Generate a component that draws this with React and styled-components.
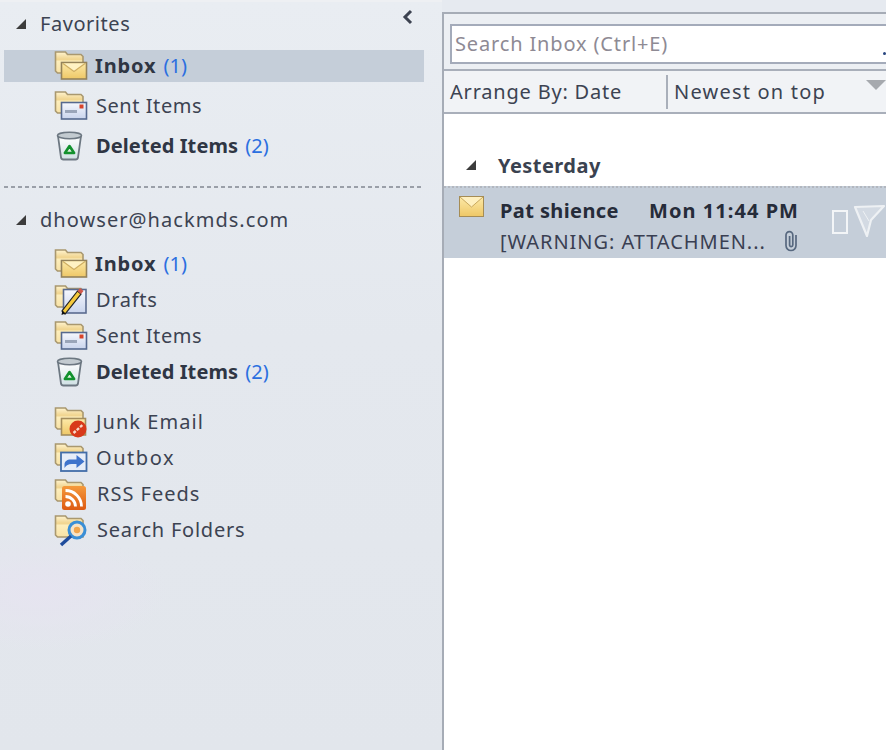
import React from 'react';
import styled, { createGlobalStyle } from 'styled-components';

const GlobalStyle = createGlobalStyle`
    html, body {
        margin: 0;
        padding: 0;
        height: 100%;
        overflow: hidden;
        background: #e6eaf0;
    }
    #root {
        height: 100%;
    }
`;

const Window = styled.div`
    display: flex;
    width: 886px;
    height: 750px;
    overflow: hidden;
    font-family: "Noto Sans", "Open Sans", sans-serif;
    color: #3a4250;
`;

const Sidebar = styled.div`
    flex: 0 0 442px;
    box-sizing: border-box;
    padding: 2px 18px 0 4px;
    border-top: 2px solid #eef0f3;
    background:
        radial-gradient(ellipse 130px 60px at 40px 590px, #e6e4f0 0%, rgba(230, 228, 240, 0) 100%),
        linear-gradient(180deg, #e9edf2 0%, #e4e8ee 45%, #e2e6ec 100%);
`;

const SectionHeader = styled.div`
    display: flex;
    align-items: center;
    height: ${p => p.$height}px;
    padding-left: 12px;
    position: relative;
    font-size: 20px;
    letter-spacing: ${p => p.$spacing}px;
    color: #3c4352;
`;

const HeaderText = styled.span`
    margin-bottom: 2px;
`;

const Arrow = styled.span`
    width: 0;
    height: 0;
    margin-right: ${p => p.$gap}px;
    border-style: solid;
    border-width: 0 0 10px 10px;
    border-color: transparent transparent #3c3c3c transparent;
`;

const Collapse = styled.svg`
    position: absolute;
    right: 10px;
    top: 5px;
`;

const FolderList = styled.div`
    display: flex;
    flex-direction: column;
    margin-top: ${p => p.$top || 0}px;
`;

const Row = styled.div`
    display: flex;
    align-items: center;
    height: ${p => p.$height}px;
    padding-left: 50px;
    background: ${p => (p.$selected ? '#c5ced9' : 'transparent')};
`;

const IconSlot = styled.span`
    display: flex;
    flex: 0 0 36px;
    margin-right: ${p => p.$gap}px;
`;

const Icon = styled.svg`
    filter: blur(0.35px);
`;

const Label = styled.span`
    margin-bottom: 2px;
    font-size: 20px;
    letter-spacing: ${p => p.$spacing}px;
    font-weight: ${p => (p.$bold ? 700 : 400)};
    color: ${p => (p.$bold ? '#2f3644' : '#3c4352')};
    white-space: nowrap;
`;

const Count = styled.span`
    margin: 0 0 2px 7px;
    font-size: 20px;
    color: #2b6fe0;
`;

const Divider = styled.div`
    margin-top: ${p => p.$top}px;
    height: 2px;
    background: repeating-linear-gradient(90deg, #9a9fa8 0, #9a9fa8 4px, transparent 4px, transparent 7px);
`;

const Main = styled.div`
    flex: 1;
    margin-top: 12px;
    min-width: 0;
    border-left: 2px solid #a6acb6;
    border-top: 2px solid #a6acb6;
    background: #fff;
    display: flex;
    flex-direction: column;
`;

const SearchBar = styled.div`
    box-sizing: border-box;
    height: 57px;
    padding: 10px 0 7px 6px;
    background: #eceff3;
    border-bottom: 2px solid #a9afba;
`;

const SearchBox = styled.div`
    box-sizing: border-box;
    height: 40px;
    position: relative;
    display: flex;
    align-items: center;
    padding: 0 0 2px 3px;
    background: #fff;
    border: 2px solid #a4abba;
    border-right: none;
    font-size: 20px;
    letter-spacing: 0.85px;
    color: #8e8a94;
`;

const SearchDot = styled.span`
    position: absolute;
    right: 0;
    bottom: 7px;
    width: 3px;
    height: 3px;
    border-radius: 50%;
    background: #27457f;
`;

const ArrangeBar = styled.div`
    box-sizing: border-box;
    height: 43px;
    display: flex;
    align-items: center;
    position: relative;
    background: #f1f3f6;
    border-bottom: 2px solid #a9afba;
    font-size: 20px;
    color: #3c4352;
`;

const ArrangeCell = styled.span`
    display: flex;
    align-items: center;
    box-sizing: border-box;
    white-space: nowrap;
    height: 34px;
    width: ${p => p.$width}px;
    padding-left: ${p => p.$pad}px;
    letter-spacing: ${p => p.$spacing}px;
    border-right: ${p => (p.$line ? '2px solid #a9afba' : 'none')};
`;

const SortArrow = styled.span`
    position: absolute;
    right: 0;
    top: 9px;
    border-style: solid;
    border-width: 10px 10px 0 10px;
    border-color: #a6a9ae transparent transparent transparent;
`;

const GroupHeader = styled.div`
    display: flex;
    align-items: center;
    height: 34px;
    margin-top: 34px;
    padding-left: 22px;
    font-size: 20px;
    font-weight: 700;
    letter-spacing: 0.45px;
    color: #3a4250;
`;

const MessageRow = styled.div`
    box-sizing: border-box;
    height: 72px;
    position: relative;
    padding: 6px 0 0 56px;
    margin-top: 4px;
    background: #c5ced9;
    border-top: 2px dotted #b2b7bf;
`;

const MessageLine = styled.div`
    display: flex;
    align-items: center;
    height: ${p => p.$height}px;
    white-space: nowrap;
`;

const Sender = styled.span`
    width: 149px;
    font-size: 20px;
    font-weight: 700;
    letter-spacing: 0.4px;
    color: #262c3a;
`;

const Time = styled.span`
    font-size: 20px;
    font-weight: 700;
    letter-spacing: 1.05px;
    color: #262c3a;
`;

const Subject = styled.span`
    width: 283px;
    font-size: 20px;
    letter-spacing: 0.95px;
    color: #3a3f52;
`;

const MailIcon = styled.svg`
    position: absolute;
    left: 15px;
    top: 8px;
    filter: blur(0.35px);
`;

const CategoryBox = styled.span`
    position: absolute;
    left: 388px;
    top: 22px;
    box-sizing: border-box;
    width: 16px;
    height: 24px;
    border: 2px solid #f3f5f7;
`;

const FlagIcon = styled.svg`
    position: absolute;
    left: 408px;
    top: 14px;
    filter: blur(0.4px);
`;

const HiddenDefs = styled.svg`
    position: absolute;
    width: 0;
    height: 0;
`;

const GradientDefs = () => (
    <HiddenDefs>
        <defs>
            <linearGradient id="folderFill" x1="0" y1="0" x2="0" y2="1">
                <stop offset="0" stopColor="#fff4cf" />
                <stop offset="0.35" stopColor="#f0d48e" />
                <stop offset="0.45" stopColor="#fdeebb" />
                <stop offset="1" stopColor="#f8e2a6" />
            </linearGradient>
            <linearGradient id="mailFill" x1="0" y1="0" x2="0" y2="1">
                <stop offset="0" stopColor="#fdeaa9" />
                <stop offset="1" stopColor="#eec766" />
            </linearGradient>
            <linearGradient id="sentFill" x1="0" y1="0" x2="0" y2="1">
                <stop offset="0" stopColor="#f6f8fe" />
                <stop offset="1" stopColor="#c9d4ec" />
            </linearGradient>
            <linearGradient id="binFill" x1="0" y1="0" x2="0" y2="1">
                <stop offset="0" stopColor="#ffffff" />
                <stop offset="1" stopColor="#cfe0e4" />
            </linearGradient>
            <linearGradient id="rssFill" x1="0" y1="0" x2="0" y2="1">
                <stop offset="0" stopColor="#f59a3c" />
                <stop offset="1" stopColor="#dd5a12" />
            </linearGradient>
        </defs>
    </HiddenDefs>
);

const FolderBack = () => (
    <path d="M1.5 4h10l2 2.5h13.5l2 2V25H3.5l-2-2z" fill="url(#folderFill)" stroke="#a9986f" strokeWidth="1.6" />
);

const Envelope = () => (
    <>
        <rect x="7.5" y="14.5" width="25" height="16.5" fill="url(#mailFill)" stroke="#94825a" strokeWidth="1.6" />
        <path d="M9 15.5l11 8 11-8" fill="#fff2c4" stroke="#cfae63" strokeWidth="1.2" />
    </>
);

const Sent = () => (
    <>
        <rect x="7.5" y="14.5" width="25" height="16.5" fill="url(#sentFill)" stroke="#56698f" strokeWidth="1.6" />
        <rect x="11" y="22" width="12" height="3" fill="#9aa5b9" />
        <rect x="25.5" y="16.5" width="4" height="4" fill="#d8442a" />
    </>
);

const Drafts = () => (
    <>
        <rect x="9.5" y="7.5" width="22.5" height="23.5" fill="url(#sentFill)" stroke="#5a6b8f" strokeWidth="1.6" />
        <path d="M8 29l3 3 16-20-3.5-3z" fill="#f5c93d" stroke="#222" strokeWidth="1.2" />
        <path d="M23.5 9l3.5 3 2.5-3-3.5-3z" fill="#d2574a" />
        <path d="M7.5 33l.8-4.5 3 3z" fill="#111" />
    </>
);

const Junk = () => (
    <>
        <rect x="7.5" y="14.5" width="24" height="16.5" fill="url(#mailFill)" stroke="#a38d5c" strokeWidth="1.6" />
        <circle cx="24" cy="25" r="8.5" fill="#d8391a" />
        <path d="M19.5 29l9-8" stroke="#f8d8c8" strokeWidth="2.4" strokeDasharray="3 1.4" />
    </>
);

const Outbox = () => (
    <>
        <rect x="7" y="12.5" width="25.5" height="18.5" fill="#e6edf8" stroke="#426da8" strokeWidth="1.8" />
        <path d="M10.5 28v-3.5c0-3 2.5-5 6-5h6V15l8 6.5-8 6.5v-4h-5c-3 0-5 1-7 4z" fill="#3f74cc" />
    </>
);

const Rss = () => (
    <>
        <rect x="8" y="10" width="24" height="24" rx="2.5" fill="url(#rssFill)" />
        <circle cx="14" cy="28" r="2.8" fill="#fff" />
        <path d="M11.5 20.5a10 10 0 0 1 10 10M11.5 14.5a16 16 0 0 1 16 16" stroke="#fff" strokeWidth="2.8" fill="none" />
    </>
);

const Search = () => (
    <>
        <circle cx="23" cy="18" r="8" fill="#f6e3c6" stroke="#3a8fd6" strokeWidth="3" />
        <circle cx="23" cy="18" r="3.2" fill="#f1a64c" />
        <path d="M17 24l-10 9" stroke="#1f4c9c" strokeWidth="3.4" />
    </>
);

const Bin = () => (
    <>
        <path d="M4 8h23l-3 21.5a2.5 2.5 0 0 1-2.5 2h-12a2.5 2.5 0 0 1-2.5-2z" fill="url(#binFill)" stroke="#6c7781" strokeWidth="1.8" />
        <ellipse cx="15.5" cy="7.5" rx="12" ry="3.2" fill="#c3cbd0" stroke="#6c7781" strokeWidth="1.6" />
        <path d="M15.5 18l4.6 7h-9.2z" fill="#dff1df" stroke="#11912d" strokeWidth="2.6" strokeLinejoin="round" />
    </>
);

const overlays = { inbox: Envelope, sent: Sent, drafts: Drafts, junk: Junk, outbox: Outbox, rss: Rss, search: Search };

const FolderIcon = ({ kind }) => {
    const Overlay = overlays[kind];
    return (
        <Icon width="36" height="36" viewBox="0 0 36 36">
            {kind === 'deleted' ? (
                <Bin />
            ) : (
                <>
                    <FolderBack />
                    <Overlay />
                </>
            )}
        </Icon>
    );
};

const Folder = ({ kind, name, count, selected, height, spacing, gap = 6 }) => (
    <Row $selected={selected} $height={height}>
        <IconSlot $gap={gap}>
            <FolderIcon kind={kind} />
        </IconSlot>
        <Label $bold={count !== undefined} $spacing={spacing}>{name}</Label>
        {count !== undefined && <Count>({count})</Count>}
    </Row>
);

const favorites = [
    { kind: 'inbox', name: 'Inbox', count: 1, selected: true, height: 32, spacing: 0.9, gap: 5 },
    { kind: 'sent', name: 'Sent Items', height: 48, spacing: 0.55 },
    { kind: 'deleted', name: 'Deleted Items', count: 2, height: 32, spacing: 0.1 },
];

const accountFolders = [
    { kind: 'inbox', name: 'Inbox', count: 1, height: 36, spacing: 0.9, gap: 5 },
    { kind: 'drafts', name: 'Drafts', height: 36, spacing: 0.7 },
    { kind: 'sent', name: 'Sent Items', height: 36, spacing: 0.55 },
    { kind: 'deleted', name: 'Deleted Items', count: 2, height: 36, spacing: 0.1 },
];

const otherFolders = [
    { kind: 'junk', name: 'Junk Email', spacing: 1.05 },
    { kind: 'outbox', name: 'Outbox', spacing: 1.55 },
    { kind: 'rss', name: 'RSS Feeds', spacing: 1, gap: 7 },
    { kind: 'search', name: 'Search Folders', spacing: 0.77, gap: 7 },
];

const App = () => {
    return (
        <Window>
            <GlobalStyle />
            <GradientDefs />
            <Sidebar>
                <SectionHeader $height={40} $spacing={0.55}>
                    <Arrow $gap={14} />
                    <HeaderText>Favorites</HeaderText>
                    <Collapse width="12" height="16" viewBox="0 0 12 16">
                        <path d="M9 2L3 8l6 6" fill="none" stroke="#3c4250" strokeWidth="3" />
                    </Collapse>
                </SectionHeader>
                <FolderList $top={6}>
                    {favorites.map(f => <Folder key={f.name} {...f} />)}
                </FolderList>
                <Divider $top={24} />
                <SectionHeader $height={64} $spacing={1.05}>
                    <Arrow $gap={14} />
                    <HeaderText>dhowser@hackmds.com</HeaderText>
                </SectionHeader>
                <FolderList $top={-6}>
                    {accountFolders.map(f => <Folder key={f.name} {...f} />)}
                </FolderList>
                <FolderList $top={14}>
                    {otherFolders.map(f => <Folder key={f.name} height={36} {...f} />)}
                </FolderList>
            </Sidebar>
            <Main>
                <SearchBar>
                    <SearchBox>
                        Search Inbox (Ctrl+E)
                        <SearchDot />
                    </SearchBox>
                </SearchBar>
                <ArrangeBar>
                    <ArrangeCell $width={224} $pad={6} $spacing={0.8} $line>Arrange By: Date</ArrangeCell>
                    <ArrangeCell $width={200} $pad={6} $spacing={1.2}>Newest on top</ArrangeCell>
                    <SortArrow />
                </ArrangeBar>
                <GroupHeader>
                    <Arrow $gap={22} />
                    Yesterday
                </GroupHeader>
                <MessageRow>
                    <MailIcon width="25" height="21" viewBox="0 0 25 21">
                        <rect x="0.5" y="0.5" width="24" height="20" fill="url(#mailFill)" stroke="#a58c55" />
                        <path d="M1 1l11.5 10L24 1" fill="#fff0bf" stroke="#c9a95f" />
                    </MailIcon>
                    <MessageLine $height={32}>
                        <Sender>Pat shience</Sender>
                        <Time>Mon 11:44 PM</Time>
                    </MessageLine>
                    <MessageLine $height={30}>
                        <Subject>[WARNING: ATTACHMEN...</Subject>
                        <svg width="16" height="22" viewBox="0 0 16 22">
                            <path d="M13 5v10.5a5 5 0 0 1-10 0V5a3.4 3.4 0 0 1 6.8 0v10a1.6 1.6 0 0 1-3.2 0V6" fill="none" stroke="#57687f" strokeWidth="1.7" />
                        </svg>
                    </MessageLine>
                    <CategoryBox />
                    <FlagIcon width="34" height="36" viewBox="0 0 34 36">
                        <path d="M3 5l29-1-13 14-4 16z" fill="#d3dae3" stroke="#eef1f4" strokeWidth="2.2" strokeLinejoin="round" />
                        <path d="M11 9l6 10" stroke="#eef1f4" strokeWidth="1" />
                    </FlagIcon>
                </MessageRow>
            </Main>
        </Window>
    );
};

export default App;
